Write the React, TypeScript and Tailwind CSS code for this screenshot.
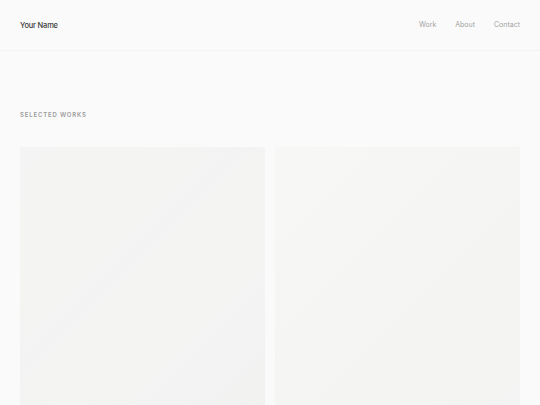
export default function App() {
  const nav = ["Work", "About", "Contact"];
  return (
    <div className="min-h-screen bg-[#fafafa] font-['Inter','Liberation_Sans',sans-serif] text-[#1a1a1a]">
      <header className="flex h-[51px] items-center justify-between border-b border-[#f3f3f3] px-5">
        <span className="pt-px text-[7.5px] font-medium tracking-tight text-[#3a3a3a]">Your Name</span>
        <nav className="flex items-center gap-[19px] pt-px">
          {nav.map((n) => (
            <a key={n} className="text-[7px] text-[#a3a3a3]">
              {n}
            </a>
          ))}
        </nav>
      </header>
      <main className="px-5 pt-[59px]">
        <h2 className="text-[6px] font-semibold uppercase tracking-[0.14em] text-[#9a9a9a]">
          Selected Works
        </h2>
        <div className="mt-[28px] grid grid-cols-2 gap-[10px]">
          <div className="aspect-[4/5] bg-[linear-gradient(135deg,#f4f4f4_0%,#f4f4f2_22%,#f3f3f3_40%,#f4f4f2_55%,#f3f3f3_70%,#f1f1f0_100%)]" />
          <div className="aspect-[4/5] bg-[linear-gradient(135deg,#f7f7f6_0%,#f5f5f3_40%,#f4f4f3_70%,#f3f3f3_100%)]" />
        </div>
      </main>
    </div>
  );
}
